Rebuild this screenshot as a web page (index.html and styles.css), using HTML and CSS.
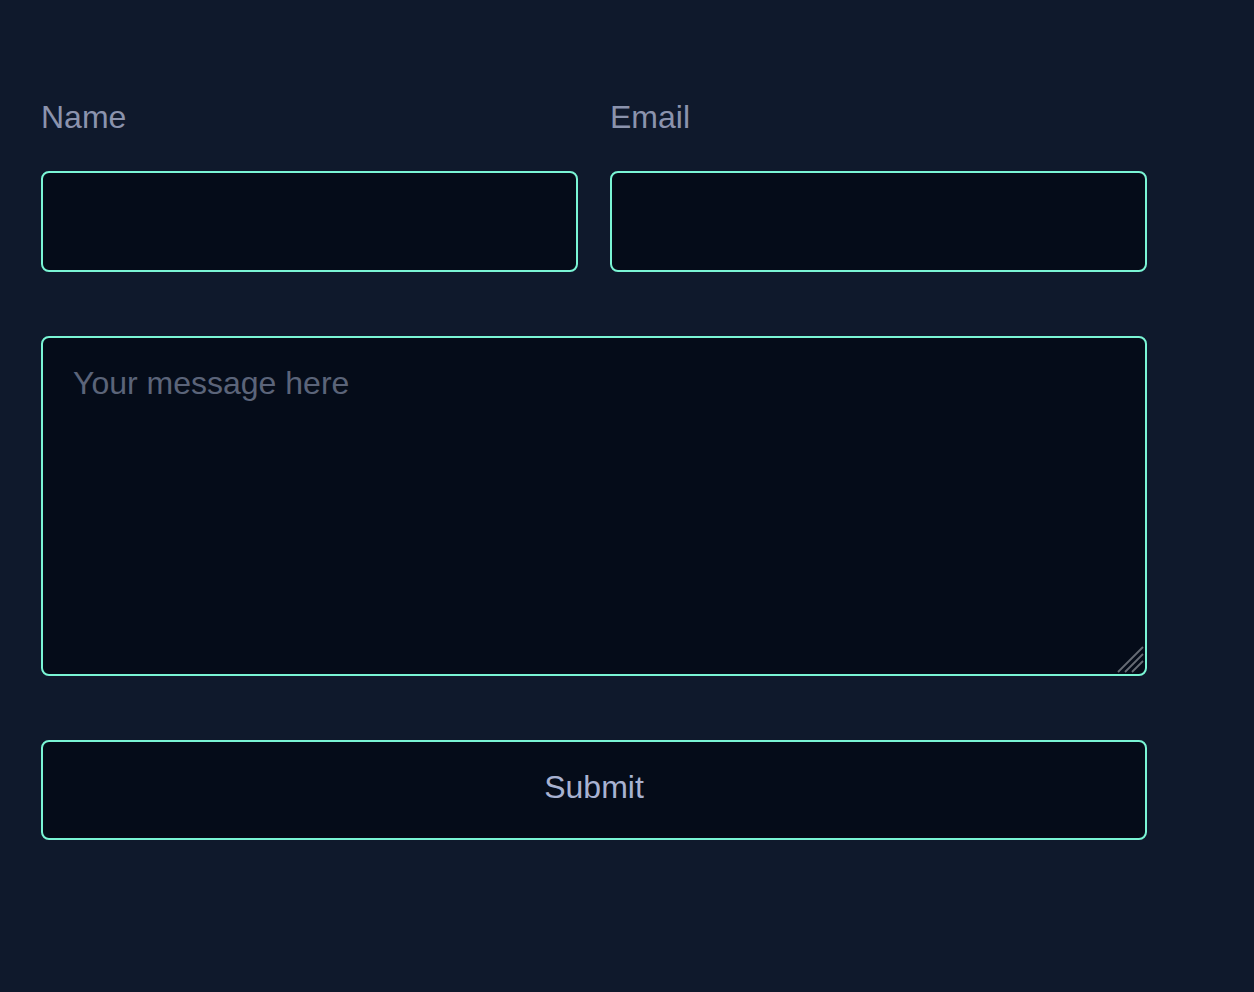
FILE: index.html
```html
<!DOCTYPE html>
<html lang="en">
<head>
<meta charset="utf-8">
<title>Contact</title>
<link rel="stylesheet" href="styles.css">
</head>
<body>
<form class="contact-form">
  <div class="row">
    <div class="field">
      <label class="label" for="name">Name</label>
      <input class="input" id="name" type="text">
    </div>
    <div class="field">
      <label class="label" for="email">Email</label>
      <input class="input" id="email" type="email">
    </div>
  </div>
  <div class="message-wrap">
    <textarea class="message" placeholder="Your message here"></textarea>
    <svg class="grip" width="28" height="28" viewBox="0 0 28 28" aria-hidden="true">
      <path d="M2 27 L27 2 M9 27 L27 9 M16 27 L27 16" stroke="#666b74" stroke-width="1.8" fill="none"/>
    </svg>
  </div>
  <button class="submit" type="button">Submit</button>
</form>
</body>
</html>
```
FILE: styles.css
```css
html, body {
  margin: 0;
  padding: 0;
  background: #0f192c;
  height: 100%;
}
body {
  font-family: "Liberation Sans", Arial, sans-serif;
  padding: 99px 0 0 41px;
  box-sizing: border-box;
}
.contact-form {
  width: 1106px;
  display: flex;
  flex-direction: column;
  gap: 64px;
}
.row {
  display: flex;
  gap: 32px;
}
.field {
  flex: 1;
  display: flex;
  flex-direction: column;
}
.label {
  font-size: 32px;
  line-height: 37px;
  color: #8b93ad;
  margin-bottom: 35px;
}
.input,
.message,
.submit {
  box-sizing: border-box;
  background: #050c19;
  border: 2px solid #7af5d5;
  border-radius: 8px;
  font-family: "Liberation Sans", Arial, sans-serif;
  font-size: 32px;
  color: #a8b2d1;
  outline: none;
}
.input {
  height: 101px;
  width: 100%;
  padding: 0 30px;
}
.message-wrap {
  position: relative;
  display: flex;
}
.message {
  height: 340px;
  width: 100%;
  padding: 27px 30px;
  line-height: 37px;
  resize: none;
  display: block;
}
.message::placeholder {
  color: #5b6479;
}
.grip {
  position: absolute;
  right: 3px;
  bottom: 3px;
  pointer-events: none;
}
.submit {
  height: 100px;
  width: 100%;
  padding: 0 0 5px;
  color: #a8b2d1;
  cursor: pointer;
}
```
